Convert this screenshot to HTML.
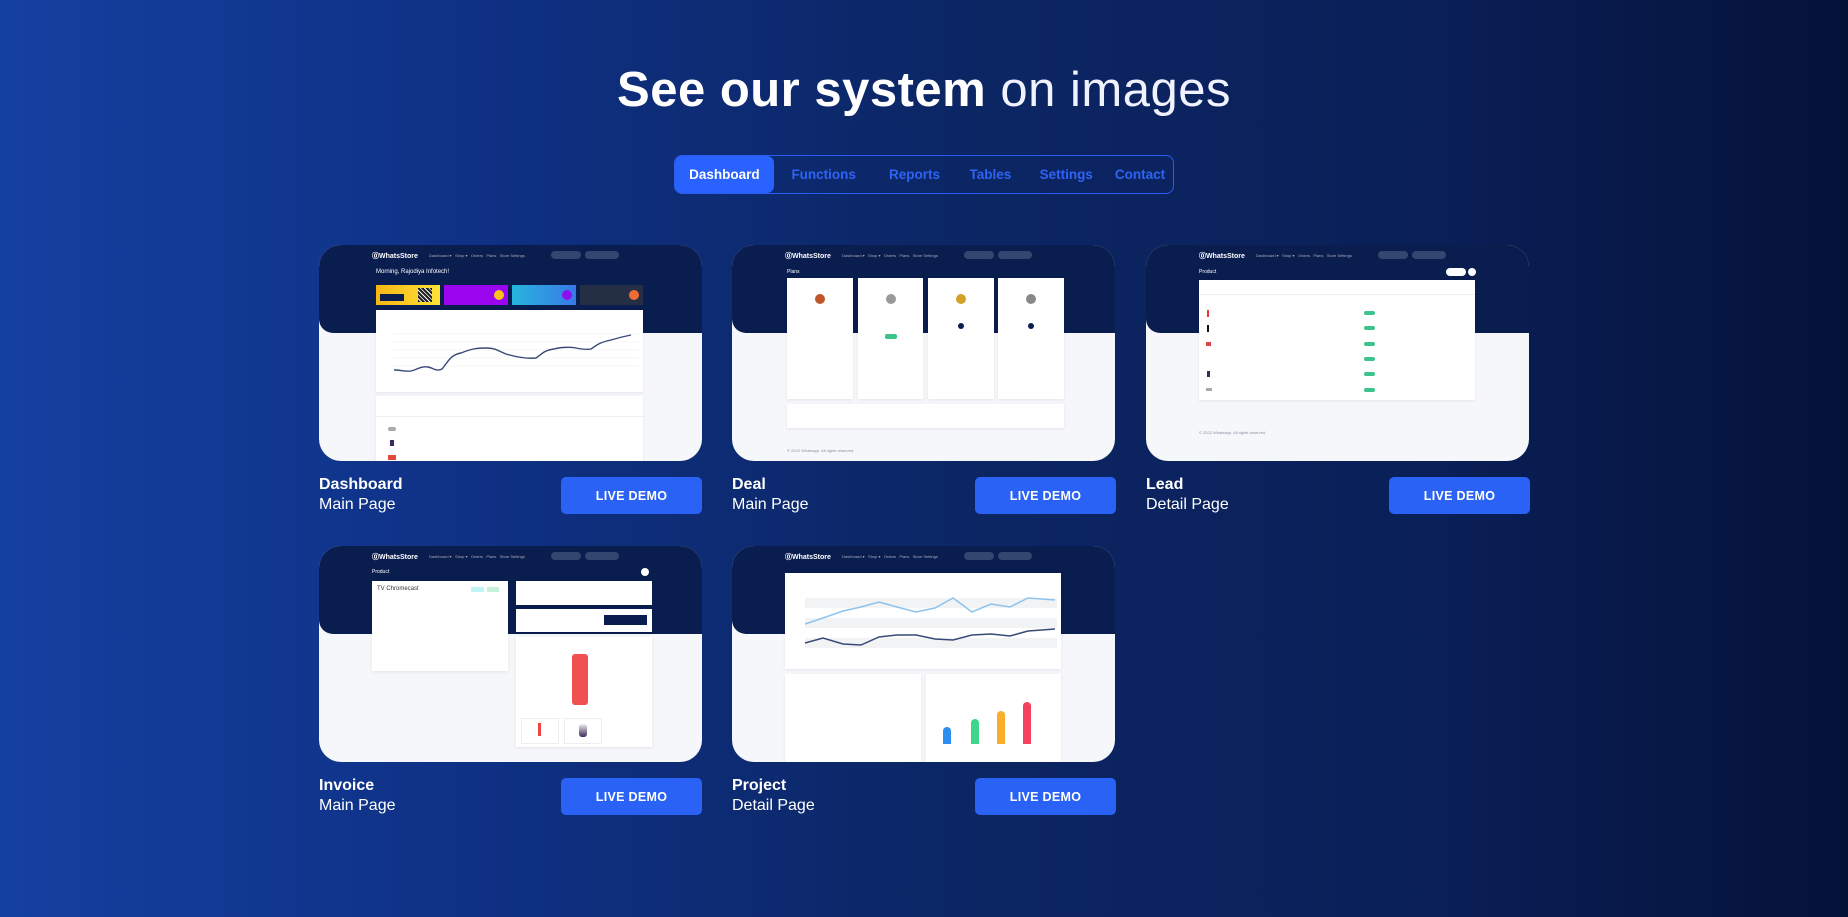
<!DOCTYPE html>
<html><head><meta charset="utf-8">
<style>
*{margin:0;padding:0;box-sizing:border-box}
html,body{width:1848px;height:917px;overflow:hidden}
body{font-family:"Liberation Sans",sans-serif;background:linear-gradient(90deg,#1440a0 0%,#0f3185 25%,#0c2766 50%,#0a1f57 78%,#051238 100%);position:relative;color:#fff}
h1{position:absolute;left:0;right:0;top:60px;text-align:center;font-size:49px;line-height:60px;letter-spacing:0.5px}
h1 b{font-weight:700}
h1 span{font-weight:300;color:#f0f3ff}
.tabs{position:absolute;left:674px;top:155px;width:500px;height:39px;border:1.5px solid #2a5cf0;border-radius:8px;display:flex;align-items:center;font-size:13.5px;font-weight:bold;color:#2f63f5}
.tabs div{height:100%;display:flex;align-items:center;justify-content:center}
.tabs .a{background:#2962ff;color:#fff;border-radius:7px;width:99px}
.card{position:absolute;width:383px;height:216px;border-radius:22px;overflow:hidden;background:#f6f7fa}
.card .dk{position:absolute;left:0;top:0;width:383px;height:88px;background:#0a1d4f;border-radius:0 0 0 14px}
.ab{position:absolute}
.lbl{position:absolute;font-size:16px;line-height:20px;color:#fff}
.lbl b{display:block;font-weight:700}
.btn{position:absolute;width:141px;height:37px;background:#2962f5;border-radius:5px;color:#fff;font-weight:bold;font-size:12.5px;display:flex;align-items:center;justify-content:center;letter-spacing:0.3px}
.w{background:#fff;position:absolute;box-shadow:0 1px 3px rgba(0,0,0,.08)}
.t{position:absolute;font-size:4px;color:#8a90a0;white-space:nowrap}
</style></head><body>
<h1><b>See our system</b> <span>on images</span></h1>
<div class="tabs"><div class="a">Dashboard</div><div style="width:100px">Functions</div><div style="width:82px">Reports</div><div style="width:70px">Tables</div><div style="width:82px">Settings</div><div style="width:66px">Contact</div></div>

<div class="card" style="left:319px;top:245px">
 <div class="dk"></div>
 <div class="ab" style="left:53px;top:6px;font-size:7px;font-weight:bold">⓪WhatsStore</div>
 <div class="t" style="left:110px;top:8px;color:#aab">Dashboard ▾ &nbsp; Shop ▾ &nbsp; Orders &nbsp; Plans &nbsp; Store Settings</div>
 <div class="ab" style="left:232px;top:6px;width:30px;height:8px;border-radius:4px;background:#33466f"></div>
 <div class="ab" style="left:266px;top:6px;width:34px;height:8px;border-radius:4px;background:#33466f"></div>
 <div class="ab" style="left:57px;top:24px;font-size:6px;color:#fff">Morning, Rajodiya Infotech!</div>
 <div class="ab" style="left:57px;top:40px;width:64px;height:20px;background:linear-gradient(90deg,#f7b614,#ffe23a)"><div class="ab" style="left:4px;top:9px;width:24px;height:7px;background:#0a1d4f"></div><div class="ab" style="left:42px;top:3px;width:14px;height:14px;background:repeating-linear-gradient(45deg,#222 0 2px,#fff 2px 3px)"></div></div>
 <div class="ab" style="left:125px;top:40px;width:64px;height:20px;background:#9a06f0"><div class="ab" style="left:50px;top:5px;width:10px;height:10px;border-radius:50%;background:#fbc21b"></div></div>
 <div class="ab" style="left:193px;top:40px;width:64px;height:20px;background:linear-gradient(90deg,#26b6dc,#3a78e8)"><div class="ab" style="left:50px;top:5px;width:10px;height:10px;border-radius:50%;background:#8d10ee"></div></div>
 <div class="ab" style="left:261px;top:40px;width:63px;height:20px;background:#252f44"><div class="ab" style="left:49px;top:5px;width:10px;height:10px;border-radius:50%;background:#f36a35"></div></div>
 <div class="w" style="left:57px;top:65px;width:267px;height:82px">
  <svg width="267" height="82" style="position:absolute;left:0;top:0"><g stroke="#eee" stroke-width=".5"><line x1="18" y1="24" x2="262" y2="24"/><line x1="18" y1="32" x2="262" y2="32"/><line x1="18" y1="40" x2="262" y2="40"/><line x1="18" y1="48" x2="262" y2="48"/><line x1="18" y1="56" x2="262" y2="56"/></g>
  <path d="M18 60 C25 60 30 62 35 61 C40 60 45 56 52 57 C58 58 60 62 66 59 C72 52 74 45 85 43 C95 39 100 38 110 38 C120 38 122 41 130 44 C140 47 150 49 160 48 C165 45 168 40 178 39 C185 37 195 37 200 38 C205 39 210 40 215 39 C222 34 225 32 235 30 C245 27 250 26 255 25" fill="none" stroke="#3a4a78" stroke-width="1.4"/></svg>
 </div>
 <div class="w" style="left:57px;top:151px;width:267px;height:70px">
  <div class="ab" style="left:0;top:20px;width:267px;height:1px;background:#eee"></div>
  <div class="ab" style="left:12px;top:31px;width:8px;height:4px;background:#aaa;border-radius:2px"></div>
  <div class="ab" style="left:14px;top:44px;width:4px;height:6px;background:#3a2a5a"></div>
  <div class="ab" style="left:12px;top:59px;width:8px;height:5px;background:#e04a3a"></div>
 </div>
</div>

<div class="card" style="left:732px;top:245px">
 <div class="dk"></div>
 <div class="ab" style="left:53px;top:6px;font-size:7px;font-weight:bold">⓪WhatsStore</div>
 <div class="t" style="left:110px;top:8px;color:#aab">Dashboard ▾ &nbsp; Shop ▾ &nbsp; Orders &nbsp; Plans &nbsp; Store Settings</div>
 <div class="ab" style="left:232px;top:6px;width:30px;height:8px;border-radius:4px;background:#33466f"></div>
 <div class="ab" style="left:266px;top:6px;width:34px;height:8px;border-radius:4px;background:#33466f"></div>
 <div class="ab" style="left:55px;top:24px;font-size:5px">Plans</div>
 <div class="w" style="left:55px;top:33px;width:66px;height:121px"><div class="ab" style="left:28px;top:16px;width:10px;height:10px;border-radius:50%;background:#c0562a"></div></div>
 <div class="w" style="left:126px;top:33px;width:65px;height:121px"><div class="ab" style="left:28px;top:16px;width:10px;height:10px;border-radius:50%;background:#999"></div><div class="ab" style="left:27px;top:56px;width:12px;height:5px;border-radius:2px;background:#3cc48a"></div></div>
 <div class="w" style="left:196px;top:33px;width:66px;height:121px"><div class="ab" style="left:28px;top:16px;width:10px;height:10px;border-radius:50%;background:#d4a02a"></div><div class="ab" style="left:30px;top:45px;width:6px;height:6px;border-radius:50%;background:#0a1d4f"></div></div>
 <div class="w" style="left:266px;top:33px;width:66px;height:121px"><div class="ab" style="left:28px;top:16px;width:10px;height:10px;border-radius:50%;background:#888"></div><div class="ab" style="left:30px;top:45px;width:6px;height:6px;border-radius:50%;background:#0a1d4f"></div></div>
 <div class="w" style="left:55px;top:159px;width:277px;height:24px"></div>
 <div class="t" style="left:55px;top:203px">© 2022 Whatsapp. All rights reserved.</div>
</div>

<div class="card" style="left:1146px;top:245px">
 <div class="dk"></div>
 <div class="ab" style="left:53px;top:6px;font-size:7px;font-weight:bold">⓪WhatsStore</div>
 <div class="t" style="left:110px;top:8px;color:#aab">Dashboard ▾ &nbsp; Shop ▾ &nbsp; Orders &nbsp; Plans &nbsp; Store Settings</div>
 <div class="ab" style="left:232px;top:6px;width:30px;height:8px;border-radius:4px;background:#33466f"></div>
 <div class="ab" style="left:266px;top:6px;width:34px;height:8px;border-radius:4px;background:#33466f"></div>
 <div class="ab" style="left:53px;top:24px;font-size:5px">Product</div>
 <div class="ab" style="left:300px;top:23px;width:20px;height:8px;border-radius:4px;background:#fff"></div>
 <div class="ab" style="left:322px;top:23px;width:8px;height:8px;border-radius:50%;background:#fff"></div>
 <div class="w" style="left:53px;top:35px;width:276px;height:120px">
  <div class="ab" style="left:0;top:14px;width:276px;height:1px;background:#eee"></div>
  <div class="ab" style="left:8px;top:30px;width:2px;height:7px;background:#e33"></div><div class="ab" style="left:165px;top:31px;width:11px;height:4px;border-radius:2px;background:#3cc48a"></div>
  <div class="ab" style="left:8px;top:45px;width:2px;height:7px;background:#111"></div><div class="ab" style="left:165px;top:46px;width:11px;height:4px;border-radius:2px;background:#3cc48a"></div>
  <div class="ab" style="left:7px;top:62px;width:5px;height:4px;background:#d44"></div><div class="ab" style="left:165px;top:62px;width:11px;height:4px;border-radius:2px;background:#3cc48a"></div>
  <div class="ab" style="left:165px;top:77px;width:11px;height:4px;border-radius:2px;background:#3cc48a"></div>
  <div class="ab" style="left:8px;top:91px;width:3px;height:6px;background:#3a2a5a"></div><div class="ab" style="left:165px;top:92px;width:11px;height:4px;border-radius:2px;background:#3cc48a"></div>
  <div class="ab" style="left:7px;top:108px;width:6px;height:3px;background:#aaa"></div><div class="ab" style="left:165px;top:108px;width:11px;height:4px;border-radius:2px;background:#3cc48a"></div>
 </div>
 <div class="t" style="left:53px;top:185px">© 2022 Whatsapp. All rights reserved.</div>
</div>

<div class="card" style="left:319px;top:546px">
 <div class="dk"></div>
 <div class="ab" style="left:53px;top:6px;font-size:7px;font-weight:bold">⓪WhatsStore</div>
 <div class="t" style="left:110px;top:8px;color:#aab">Dashboard ▾ &nbsp; Shop ▾ &nbsp; Orders &nbsp; Plans &nbsp; Store Settings</div>
 <div class="ab" style="left:232px;top:6px;width:30px;height:8px;border-radius:4px;background:#33466f"></div>
 <div class="ab" style="left:266px;top:6px;width:34px;height:8px;border-radius:4px;background:#33466f"></div>
 <div class="ab" style="left:53px;top:23px;font-size:5px">Product</div>
 <div class="ab" style="left:322px;top:22px;width:8px;height:8px;border-radius:50%;background:#fff"></div>
 <div class="w" style="left:53px;top:35px;width:136px;height:90px"><div class="ab" style="left:5px;top:5px;font-size:6px;color:#333">TV Chromecast</div><div class="ab" style="left:99px;top:6px;width:13px;height:5px;background:#bff3f6"></div><div class="ab" style="left:115px;top:6px;width:12px;height:5px;background:#c6f3d8"></div></div>
 <div class="w" style="left:197px;top:35px;width:136px;height:24px"></div>
 <div class="w" style="left:197px;top:63px;width:136px;height:23px"><div class="ab" style="left:88px;top:6px;width:43px;height:10px;background:#0a1d4f"></div></div>
 <div class="w" style="left:197px;top:91px;width:136px;height:110px">
  <div class="ab" style="left:56px;top:17px;width:16px;height:51px;border-radius:3px;background:#f05050"></div>
  <div class="ab" style="left:5px;top:81px;width:38px;height:26px;border:1px solid #eee"></div><div class="ab" style="left:22px;top:86px;width:3px;height:13px;background:#e44"></div>
  <div class="ab" style="left:48px;top:81px;width:38px;height:26px;border:1px solid #eee"></div><div class="ab" style="left:63px;top:87px;width:8px;height:13px;border-radius:3px;background:linear-gradient(#eee,#3a2a5a)"></div>
 </div>
</div>

<div class="card" style="left:732px;top:546px">
 <div class="dk"></div>
 <div class="ab" style="left:53px;top:6px;font-size:7px;font-weight:bold">⓪WhatsStore</div>
 <div class="t" style="left:110px;top:8px;color:#aab">Dashboard ▾ &nbsp; Shop ▾ &nbsp; Orders &nbsp; Plans &nbsp; Store Settings</div>
 <div class="ab" style="left:232px;top:6px;width:30px;height:8px;border-radius:4px;background:#33466f"></div>
 <div class="ab" style="left:266px;top:6px;width:34px;height:8px;border-radius:4px;background:#33466f"></div>
 <div class="w" style="left:53px;top:27px;width:276px;height:96px">
  <svg width="276" height="96" style="position:absolute;left:0;top:0">
  <rect x="20" y="25" width="252" height="10" fill="#f2f3f5"/><rect x="20" y="45" width="252" height="10" fill="#f2f3f5"/><rect x="20" y="65" width="252" height="10" fill="#f2f3f5"/>
  <path d="M20 51 L38 45 L58 38 L76 34 L94 29 L112 34 L131 39 L150 35 L168 25 L187 39 L206 31 L225 34 L243 25 L270 27" fill="none" stroke="#8ec3ec" stroke-width="1.5"/>
  <path d="M20 70 L38 65 L58 71 L76 72 L94 64 L112 62 L131 62 L150 66 L168 67 L187 62 L206 61 L225 63 L243 58 L270 56" fill="none" stroke="#3a4a78" stroke-width="1.5"/></svg>
 </div>
 <div class="w" style="left:53px;top:128px;width:136px;height:90px"></div>
 <div class="w" style="left:194px;top:128px;width:135px;height:90px">
  <div class="ab" style="left:17px;top:53px;width:8px;height:17px;border-radius:4px 4px 0 0;background:#2e8ef0"></div>
  <div class="ab" style="left:45px;top:45px;width:8px;height:25px;border-radius:4px 4px 0 0;background:#3fd58a"></div>
  <div class="ab" style="left:71px;top:37px;width:8px;height:33px;border-radius:4px 4px 0 0;background:#fbae2a"></div>
  <div class="ab" style="left:97px;top:28px;width:8px;height:42px;border-radius:4px 4px 0 0;background:#f5405e"></div>
 </div>
</div>

<div class="lbl" style="left:319px;top:475px"><b>Dashboard</b>Main Page</div>
<div class="btn" style="left:561px;top:477px">LIVE DEMO</div>
<div class="lbl" style="left:732px;top:475px"><b>Deal</b>Main Page</div>
<div class="btn" style="left:975px;top:477px">LIVE DEMO</div>
<div class="lbl" style="left:1146px;top:475px"><b>Lead</b>Detail Page</div>
<div class="btn" style="left:1389px;top:477px">LIVE DEMO</div>
<div class="lbl" style="left:319px;top:776px"><b>Invoice</b>Main Page</div>
<div class="btn" style="left:561px;top:778px">LIVE DEMO</div>
<div class="lbl" style="left:732px;top:776px"><b>Project</b>Detail Page</div>
<div class="btn" style="left:975px;top:778px">LIVE DEMO</div>
</body></html>
